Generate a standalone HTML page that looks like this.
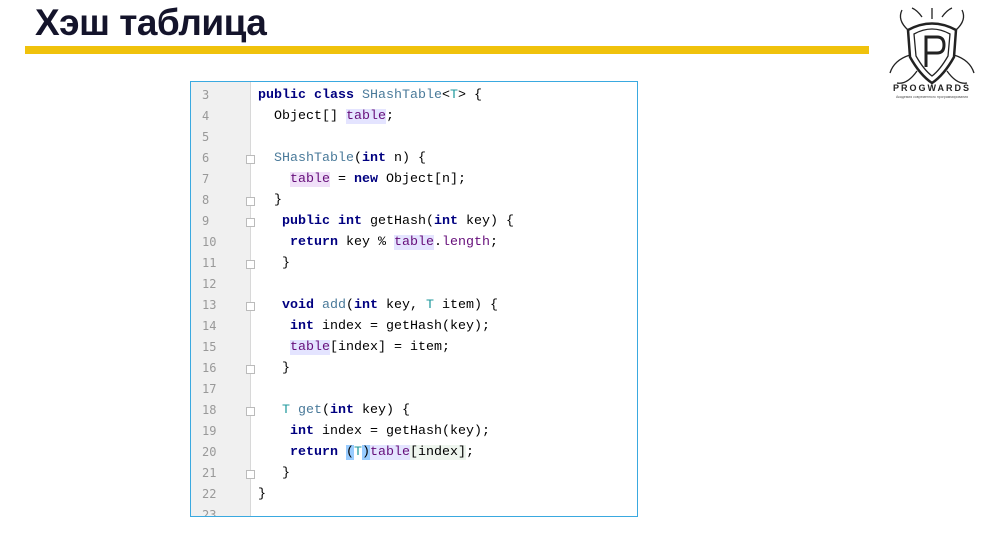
<!DOCTYPE html><html><head><meta charset="utf-8"><style>
body{margin:0;width:1000px;height:550px;background:#fff;position:relative;overflow:hidden;font-family:"Liberation Sans","DejaVu Sans",sans-serif}
.t{position:absolute;left:35px;top:2px;font-size:37px;font-weight:bold;color:#14142b;letter-spacing:-0.5px}
.bar{position:absolute;left:25px;top:46px;width:844px;height:8px;background:#f0c20c}
.box{position:absolute;left:190px;top:81px;width:446px;height:434px;border:1px solid #3aa9e0;overflow:hidden}
.g{position:absolute;left:0;top:0;width:59px;height:100%;background:#f0f0f0;border-right:1px solid #d8d8d8}
.l{position:absolute;left:0;height:21px;line-height:21px;font-family:"Liberation Mono","DejaVu Sans Mono",monospace;font-size:13.33px;white-space:pre;color:#000}
.n{position:absolute;left:11px;color:#999;font-size:12px;font-family:"DejaVu Sans Mono",monospace}
.c{position:absolute;left:67px}
.k{color:#000080;font-weight:bold}.gr{color:#4a7a9a}.ty{color:#20999d}.f{color:#660e7a}
.h{background:#e4e4ff}.hv{background:#f0e0f8}.sel{background:#99ccff}
.fd{position:absolute;left:55px;width:7px;height:7px;border:1px solid #bbb;background:#fff;top:7px}
</style></head><body>
<div class="t">Хэш таблица</div>
<div class="bar"></div>
<svg style="position:absolute;left:882px;top:5px" width="100" height="95" viewBox="0 0 100 95">
<g fill="none" stroke="#222" stroke-width="1.3">
<path d="M26 25 Q50 12 74 25 L72 52 Q62 70 50 78 Q38 70 28 52 Z" stroke-width="2.5"/>
<path d="M32 29 Q50 19 68 29 L66 51 Q58 65 50 71 Q42 65 34 51 Z"/>
<path d="M44 62 V32 H55 Q62 32 62 40 Q62 48 55 48 H44" stroke-width="3"/>
<path d="M26 25 Q15 15 20 5 M74 25 Q85 15 80 5 M50 14 V3 M28 50 Q12 55 8 68 M72 50 Q88 55 92 68 M35 66 Q25 80 15 78 M65 66 Q75 80 85 78 M40 12 Q35 5 30 3 M60 12 Q65 5 70 3"/>
</g>
<text x="50" y="86" text-anchor="middle" font-size="9" font-weight="bold" letter-spacing="2" fill="#222" font-family="Liberation Sans">PROGWARDS</text>
<text x="50" y="93" text-anchor="middle" font-size="3.5" fill="#555" font-family="Liberation Sans">Академия современного программирования</text>
</svg>
<div class="box"><div class="g"></div>
<div class="l" style="top:3px"><span class="n">3</span><span class="c"><span class="k">public class</span> <span class="gr">SHashTable</span>&lt;<span class="ty">T</span>&gt; {</span></div>
<div class="l" style="top:24px"><span class="n">4</span><span class="c">  Object[] <span class="f h">table</span>;</span></div>
<div class="l" style="top:45px"><span class="n">5</span></div>
<div class="l" style="top:66px"><span class="n">6</span><span class="fd"></span><span class="c">  <span class="gr">SHashTable</span>(<span class="k">int</span> n) {</span></div>
<div class="l" style="top:87px"><span class="n">7</span><span class="c">    <span class="f hv">table</span> = <span class="k">new</span> Object[n];</span></div>
<div class="l" style="top:108px"><span class="n">8</span><span class="fd"></span><span class="c">  }</span></div>
<div class="l" style="top:129px"><span class="n">9</span><span class="fd"></span><span class="c">   <span class="k">public int</span> getHash(<span class="k">int</span> key) {</span></div>
<div class="l" style="top:150px"><span class="n">10</span><span class="c">    <span class="k">return</span> key % <span class="f h">table</span>.<span class="f">length</span>;</span></div>
<div class="l" style="top:171px"><span class="n">11</span><span class="fd"></span><span class="c">   }</span></div>
<div class="l" style="top:192px"><span class="n">12</span></div>
<div class="l" style="top:213px"><span class="n">13</span><span class="fd"></span><span class="c">   <span class="k">void</span> <span class="gr">add</span>(<span class="k">int</span> key, <span class="ty">T</span> item) {</span></div>
<div class="l" style="top:234px"><span class="n">14</span><span class="c">    <span class="k">int</span> index = getHash(key);</span></div>
<div class="l" style="top:255px"><span class="n">15</span><span class="c">    <span class="f h">table</span>[index] = item;</span></div>
<div class="l" style="top:276px"><span class="n">16</span><span class="fd"></span><span class="c">   }</span></div>
<div class="l" style="top:297px"><span class="n">17</span></div>
<div class="l" style="top:318px"><span class="n">18</span><span class="fd"></span><span class="c">   <span class="ty">T</span> <span class="gr">get</span>(<span class="k">int</span> key) {</span></div>
<div class="l" style="top:339px"><span class="n">19</span><span class="c">    <span class="k">int</span> index = getHash(key);</span></div>
<div class="l" style="top:360px"><span class="n">20</span><span class="c">    <span class="k">return</span> <span class="sel">(</span><span class="ty">T</span><span class="sel">)</span><span class="f h">table</span><span style="background:#eef5ee">[index]</span>;</span></div>
<div class="l" style="top:381px"><span class="n">21</span><span class="fd"></span><span class="c">   }</span></div>
<div class="l" style="top:402px"><span class="n">22</span><span class="c">}</span></div>
<div class="l" style="top:423px"><span class="n">23</span></div>
</div>
</body></html>
